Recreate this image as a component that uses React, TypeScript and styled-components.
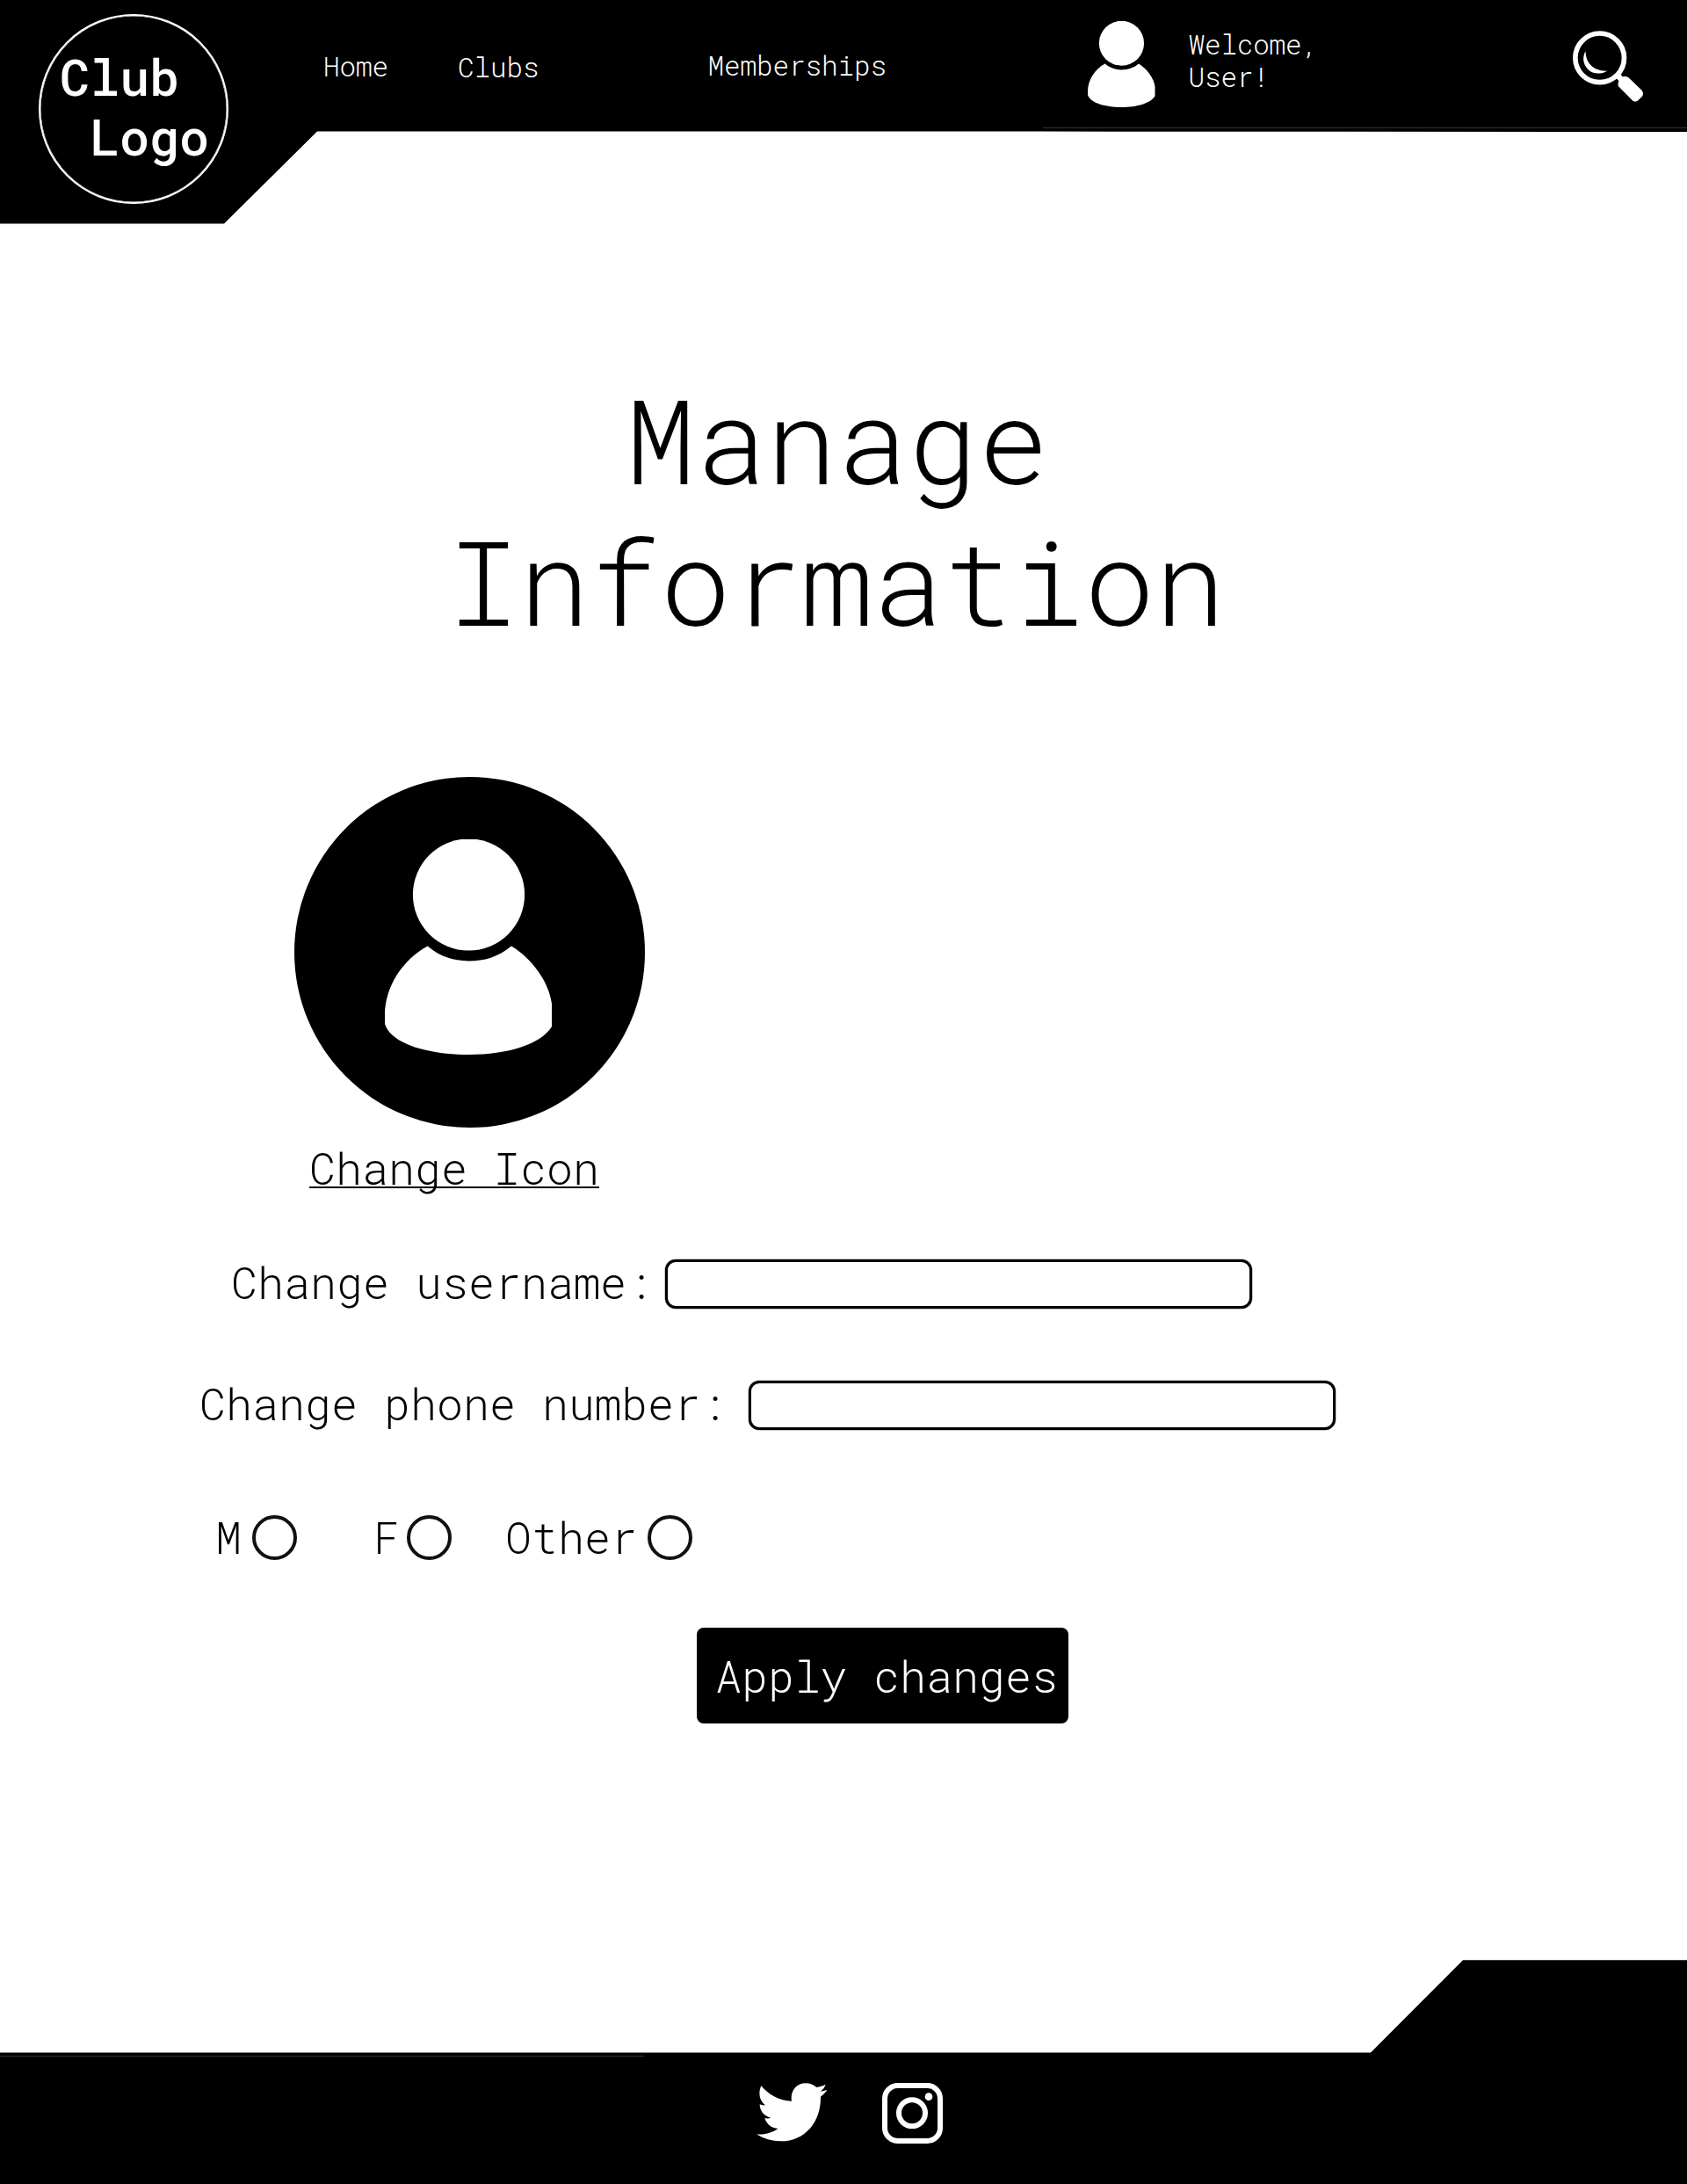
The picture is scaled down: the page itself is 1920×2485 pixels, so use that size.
import React from "react";
import styled, { createGlobalStyle } from "styled-components";

const Global = createGlobalStyle`
  *, *::before, *::after { box-sizing: border-box; }
  body {
    margin: 0;
    background: #fff;
    color: #000;
    font-family: "Roboto Mono", "Liberation Mono", monospace;
    font-weight: 300;
  }
`;

const Page = styled.div`
  width: 1920px;
  height: 2485px;
  display: flex;
  flex-direction: column;
  background: #fff;
  overflow: hidden;
`;

const Header = styled.header`
  flex: none;
  height: 254.5px;
  display: flex;
  align-items: flex-start;
  background: linear-gradient(#333, #333) 1187px 145px / 733px 1px no-repeat #000;
  color: #fff;
  clip-path: polygon(0 0, 100% 0, 100% 150px, 1187px 149.6px, 361px 149.5px, 255px 100%, 0 100%);
`;

const Logo = styled.div`
  flex: none;
  width: 216px;
  height: 216px;
  margin: 16px 0 0 43.5px;
  padding: 35px 0 0 22.5px;
  border: 2px solid #fff;
  box-shadow: inset 0 0 0 0.5px #fff;
  border-radius: 50%;
  font-size: 57px;
  font-weight: 500;
  line-height: 68px;
  letter-spacing: -0.2px;
  white-space: pre;
`;

const Nav = styled.nav`
  display: flex;
  align-items: flex-start;
`;

const NavLink = styled.a<{ $left: number; $top: number }>`
  margin: ${(p) => p.$top}px 0 0 ${(p) => p.$left}px;
  color: inherit;
  font-size: 31px;
  line-height: 37px;
  letter-spacing: -0.1px;
  white-space: pre;
  text-decoration: none;
`;

const UserBox = styled.div`
  display: flex;
  align-items: flex-start;
  margin-left: 229px;
`;

const Greeting = styled.p`
  margin: 32px 0 0 38px;
  width: 160px;
  font-size: 31px;
  line-height: 37px;
  letter-spacing: -0.2px;
`;

const UserGlyph = styled.svg<{ $w: number; $h: number; $top?: number }>`
  flex: none;
  display: block;
  width: ${(p) => p.$w}px;
  height: ${(p) => p.$h}px;
  margin-top: ${(p) => p.$top ?? 0}px;
  fill: #fff;
`;

const SearchButton = styled.button`
  margin: 34.5px 50px 0 auto;
  padding: 0;
  border: 0;
  background: none;
  line-height: 0;
`;

const Main = styled.main`
  flex: 1;
  display: flex;
  flex-direction: column;
  align-items: flex-start;
`;

const Title = styled.h1`
  width: 1905px;
  margin: 164.5px 0 0;
  text-align: center;
  font-size: 134px;
  font-weight: 300;
  line-height: 161px;
`;

const Avatar = styled.div`
  display: flex;
  justify-content: center;
  align-items: flex-start;
  width: 399px;
  height: 399px;
  margin: 142.5px 0 0 335.4px;
  padding: 71.2px 4px 0 0;
  border-radius: 50%;
  background: #000;
`;

const ChangeIcon = styled.a`
  margin: 16.5px 0 0 352px;
  color: inherit;
  font-size: 50px;
  line-height: 60px;
  text-decoration: underline;
  text-decoration-thickness: 2px;
  text-underline-offset: 2px;
  text-decoration-skip-ink: none;
`;

const Field = styled.label<{ $left: number; $top: number; $gap: number }>`
  display: flex;
  align-items: flex-start;
  gap: ${(p) => p.$gap}px;
  height: 58px;
  margin: ${(p) => p.$top}px 0 0 ${(p) => p.$left}px;
  font-size: 50px;
  line-height: 52px;
  white-space: pre;
`;

const TextInput = styled.input`
  width: 668px;
  height: 56px;
  border: 3px solid #000;
  border-radius: 12px;
  background: #fff;
  outline: none;
  box-shadow: 0 0 0 0.5px rgba(0, 0, 0, 0.45);
`;

const Choices = styled.div`
  display: flex;
  height: 50px;
  margin: 95.5px 0 0 245px;
`;

const Choice = styled.label<{ $left?: number; $gap: number }>`
  display: flex;
  align-items: flex-start;
  gap: ${(p) => p.$gap}px;
  margin-left: ${(p) => p.$left ?? 0}px;
  font-size: 50px;
  line-height: 49px;
`;

const Radio = styled.input.attrs({ type: "radio", name: "gender" })`
  appearance: none;
  width: 51px;
  height: 51px;
  margin: -0.5px 0 0;
  border: 4px solid #111;
  border-radius: 50%;
`;

const Apply = styled.button`
  width: 422.5px;
  height: 109px;
  margin: 77.7px 0 0 793px;
  padding: 1px 0 0 21px;
  border: 0;
  border-radius: 8px;
  background: #000;
  color: #fff;
  font: inherit;
  font-size: 50px;
  line-height: 60px;
  text-align: left;
  white-space: nowrap;
`;

const Footer = styled.footer`
  flex: none;
  height: 255px;
  display: flex;
  justify-content: flex-start;
  align-items: flex-start;
  gap: 63px;
  padding: 140px 0 0 860.7px;
  background: linear-gradient(#333, #333) 0 109px / 733px 1px no-repeat #000;
  clip-path: polygon(0 105.4px, 1560px 105.5px, 1665px 0.2px, 100% 0.2px, 100% 100%, 0 100%);
`;

const Person = ({ w, h, top }: { w: number; h: number; top?: number }) => (
  <UserGlyph $w={w} $h={h} $top={top} viewBox="0 0 190 245" preserveAspectRatio="none">
    <circle cx="95.5" cy="63" r="63.6" />
    <path d="M48.7 121.5C20 137 0 168 0 200V210C7 233 50 245 95.5 245C140 245 178 233 190 213V187C187 163 168 136 144 121.5C129 134 113 138.5 95.5 138.5C78 138.5 62 133 48.7 121.5Z" />
  </UserGlyph>
);

const SearchIcon = () => (
  <svg width="80" height="81" viewBox="150 104 240 243" fill="#fff">
    <circle cx="242" cy="196.5" r="83.5" fill="none" stroke="#fff" strokeWidth="17" />
    <path d="M194 174C193 212 220 243 267 241C248 253 219 254 202 236C184 218 182 192 194 174Z" />
    <path d="M297 264L312 249L319 261C327 259 336 259 342 265L384 306C391 313 392 322 386 329L373 342C367 347 359 347 353 341L309 297C303 291 304 284 307 276Z" />
  </svg>
);

const TwitterIcon = () => (
  <svg width="80.3" height="66.5" viewBox="122 90 241 199.5" fill="#fff">
    <path d="M122 265C149 268 176 260 195 246C172 244 156 230 150 210C157 212 164 212 171 209C147 203 133 185 133 163C139 166 145 167 152 166C132 151 127 124 138 100C164 131 201 151 242 152C236 119 258 91 290 91C304 91 317 96 327 105C338 103 349 100 358 95C355 105 349 113 340 119C348 118 356 116 363 114C357 123 350 130 341 137C343 220 290 289 205 289C175 289 146 281 122 265Z" />
  </svg>
);

const InstagramIcon = () => (
  <svg width="69" height="69" viewBox="0 0 207 207" fill="none" stroke="#fff">
    <rect x="9" y="9" width="189" height="189" rx="44" strokeWidth="18" />
    <circle cx="102" cy="103" r="45" strokeWidth="18" />
    <circle cx="159" cy="47" r="13" fill="#fff" stroke="none" />
  </svg>
);

export default function App() {
  return (
    <>
      <Global />
      <Page>
        <Header>
          <Logo>{"Club\n Logo"}</Logo>
          <Nav>
            <NavLink $left={108.5} $top={57}>Home</NavLink>
            <NavLink $left={79} $top={58}>Clubs</NavLink>
            <NavLink $left={192} $top={56}>Memberships</NavLink>
          </Nav>
          <UserBox>
            <Person w={76.5} h={98} top={23.5} />
            <Greeting>Welcome, User!</Greeting>
          </UserBox>
          <SearchButton aria-label="Search">
            <SearchIcon />
          </SearchButton>
        </Header>
        <Main>
          <Title>
            Manage
            <br />
            Information
          </Title>
          <Avatar>
            <Person w={190} h={245} />
          </Avatar>
          <ChangeIcon>Change Icon</ChangeIcon>
          <Field $left={263} $top={74} $gap={14}>
            Change username:
            <TextInput />
          </Field>
          <Field $left={227} $top={80} $gap={25}>
            Change phone number:
            <TextInput />
          </Field>
          <Choices>
            <Choice $gap={12}>
              M<Radio />
            </Choice>
            <Choice $left={87} $gap={8}>
              F<Radio />
            </Choice>
            <Choice $left={61} $gap={12}>
              Other<Radio />
            </Choice>
          </Choices>
          <Apply>Apply changes</Apply>
        </Main>
        <Footer>
          <TwitterIcon />
          <InstagramIcon />
        </Footer>
      </Page>
    </>
  );
}
